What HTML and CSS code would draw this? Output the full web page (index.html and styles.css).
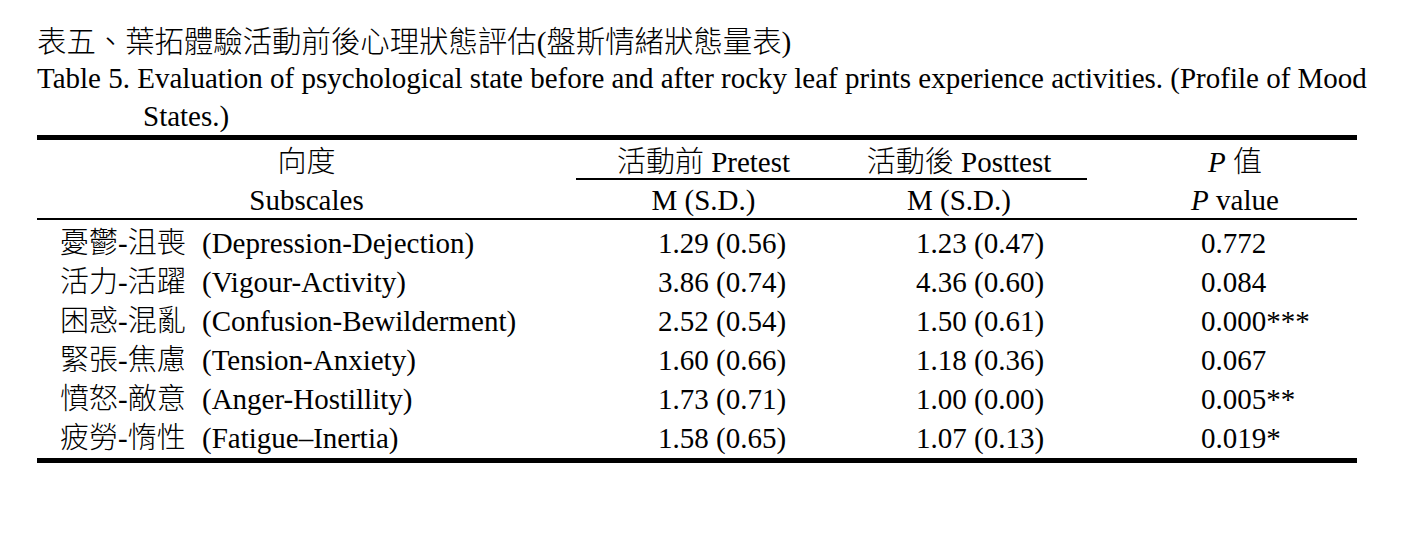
FILE: index.html
```html
<!DOCTYPE html>
<html lang="zh-Hant">
<head>
<meta charset="utf-8">
<title>表五</title>
<link rel="stylesheet" href="styles.css">
</head>
<body>
<div class="page">
  <p class="cap-zh">表五、葉拓體驗活動前後心理狀態評估(盤斯情緒狀態量表)</p>
  <p class="cap-en">Table 5. Evaluation of psychological state before and after rocky leaf prints experience activities. (Profile of Mood<br>States.)</p>
  <table class="pt">
    <colgroup>
      <col class="w1"><col class="w2"><col class="w3"><col class="w4">
    </colgroup>
    <thead>
      <tr class="h1">
        <th>向度</th>
        <th class="ul">活動前 Pretest</th>
        <th class="ul">活動後 Posttest</th>
        <th class="pv"><i>P</i> 值</th>
      </tr>
      <tr class="h2">
        <th>Subscales</th>
        <th>M (S.D.)</th>
        <th>M (S.D.)</th>
        <th class="pv"><i>P</i> value</th>
      </tr>
    </thead>
    <tbody>
      <tr><td class="sub"><span class="zh">憂鬱-沮喪</span>(Depression-Dejection)</td><td class="m1">1.29 (0.56)</td><td class="m2">1.23 (0.47)</td><td class="p">0.772</td></tr>
      <tr><td class="sub"><span class="zh">活力-活躍</span>(Vigour-Activity)</td><td class="m1">3.86 (0.74)</td><td class="m2">4.36 (0.60)</td><td class="p">0.084</td></tr>
      <tr><td class="sub"><span class="zh">困惑-混亂</span>(Confusion-Bewilderment)</td><td class="m1">2.52 (0.54)</td><td class="m2">1.50 (0.61)</td><td class="p">0.000***</td></tr>
      <tr><td class="sub"><span class="zh">緊張-焦慮</span>(Tension-Anxiety)</td><td class="m1">1.60 (0.66)</td><td class="m2">1.18 (0.36)</td><td class="p">0.067</td></tr>
      <tr><td class="sub"><span class="zh">憤怒-敵意</span>(Anger-Hostillity)</td><td class="m1">1.73 (0.71)</td><td class="m2">1.00 (0.00)</td><td class="p">0.005**</td></tr>
      <tr><td class="sub"><span class="zh">疲勞-惰性</span>(Fatigue–Inertia)</td><td class="m1">1.58 (0.65)</td><td class="m2">1.07 (0.13)</td><td class="p">0.019*</td></tr>
    </tbody>
  </table>
</div>
</body>
</html>
```

FILE: styles.css
```css
html, body {
  margin: 0;
  background: #fff;
}

body {
  font-family: "Liberation Serif", "Noto Sans CJK TC", serif;
  color: #000;
}

.page {
  padding: 24px 0 0 37px;
  width: 1320px;
}

.cap-zh {
  margin: 0;
  font-size: 29.4px;
  line-height: 36px;
  font-weight: 300;
  white-space: nowrap;
}

.cap-en {
  margin: 0;
  font-size: 29px;
  line-height: 37.5px;
  padding-left: 106px;
  text-indent: -106px;
  white-space: nowrap;
}

.pt {
  width: 1320px;
  table-layout: fixed;
  border-collapse: separate;
  border-spacing: 0;
  border-top: 5px solid #000;
  border-bottom: 5px solid #000;
  font-size: 29px;
  font-weight: 300;
}

.w1 { width: 539px; }
.w2 { width: 255px; }
.w3 { width: 256px; }
.w4 { width: 270px; }

.pt th {
  font-weight: 300;
  padding: 0;
  text-align: center;
  white-space: nowrap;
}

.h1 th {
  padding-top: 6px;
  height: 32px;
  line-height: 32px;
}

.h1 th.ul {
  border-bottom: 2px solid #000;
}

.h1 th:not(.ul) {
  padding-bottom: 2px;
}

.h2 th {
  padding-top: 3px;
  height: 35px;
  line-height: 35px;
  border-bottom: 2px solid #000;
}

.pt th.pv {
  padding-left: 26px;
}

.pt td {
  padding: 0;
  height: 39px;
  line-height: 39px;
  white-space: nowrap;
  vertical-align: middle;
}

.pt tbody tr:first-child td {
  padding-top: 4px;
}

.pt td.sub {
  padding-left: 23px;
}

.zh {
  display: inline-block;
  width: 142px;
}

.pt td.m1 {
  padding-left: 82px;
}

.pt td.m2 {
  padding-left: 85px;
}

.pt td.p {
  padding-left: 114px;
}
```
